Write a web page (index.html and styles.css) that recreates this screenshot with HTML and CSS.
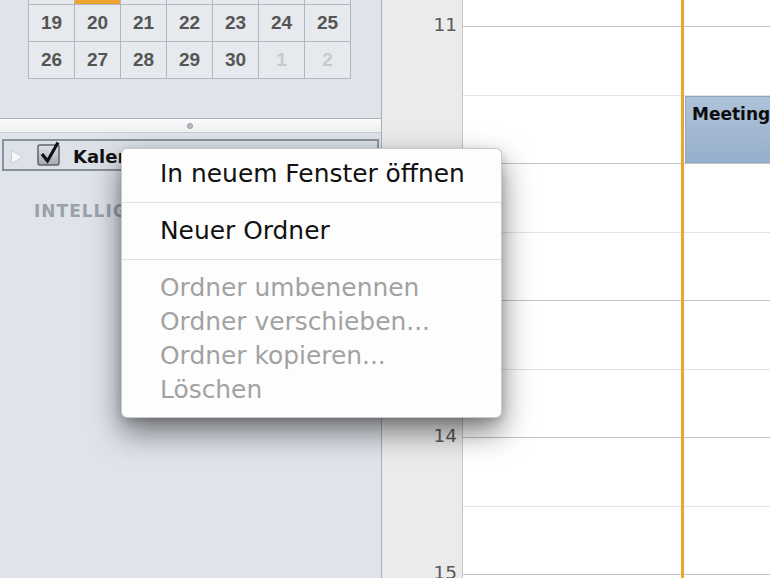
FILE: index.html
```html
<!DOCTYPE html>
<html lang="de">
<head>
<meta charset="utf-8">
<title>Kalender</title>
<link rel="stylesheet" href="styles.css">
</head>
<body>
<div class="app">
  <aside class="sidebar">
    <div class="minical">
      <div class="cell">12</div><div class="cell today">13</div><div class="cell">14</div><div class="cell">15</div><div class="cell">16</div><div class="cell">17</div><div class="cell">18</div>
      <div class="cell">19</div><div class="cell">20</div><div class="cell">21</div><div class="cell">22</div><div class="cell">23</div><div class="cell">24</div><div class="cell">25</div>
      <div class="cell">26</div><div class="cell">27</div><div class="cell">28</div><div class="cell">29</div><div class="cell">30</div><div class="cell muted">1</div><div class="cell muted">2</div>
    </div>
    <div class="splitter"><span class="dimple"></span></div>
    <div class="folder-row">
      <svg class="disclosure" width="12" height="14" viewBox="0 0 12 14"><path d="M0.5 0.5 L11.5 7 L0.5 13.5 Z" fill="#f7f8fa" stroke="#c9ced6" stroke-width="1"/></svg>
      <svg class="checkbox" width="24" height="24" viewBox="0 0 24 24">
        <defs><linearGradient id="cb" x1="0" y1="0" x2="0" y2="1"><stop offset="0" stop-color="#e2e5ea"/><stop offset="1" stop-color="#a3a9b2"/></linearGradient></defs>
        <rect x="1" y="3" width="21" height="20" rx="2" fill="url(#cb)" stroke="#5d636c" stroke-width="1.5"/>
        <path d="M5 12 L10.5 19 L21 0.5" fill="none" stroke="#111" stroke-width="3.2" stroke-linejoin="miter"/>
      </svg>
      <span class="folder-name">Kalender</span>
    </div>
    <div class="section-title">INTELLIGENTE ORDNER</div>
  </aside>

  <div class="timecol">
    <div class="hour">11</div>
    <div class="hour">12</div>
    <div class="hour">13</div>
    <div class="hour">14</div>
    <div class="hour">15</div>
  </div>

  <div class="days">
    <div class="day"></div>
    <div class="day today-col">
      <div class="event" style="top:96px;height:67px">Meeting</div>
    </div>
  </div>
</div>

<div class="context-menu">
  <div class="item">In neuem Fenster öffnen</div>
  <div class="sep"></div>
  <div class="item">Neuer Ordner</div>
  <div class="sep"></div>
  <div class="item disabled">Ordner umbenennen</div>
  <div class="item disabled">Ordner verschieben...</div>
  <div class="item disabled">Ordner kopieren...</div>
  <div class="item disabled">Löschen</div>
</div>
</body>
</html>
```

FILE: styles.css
```css
* { box-sizing: border-box; }
html, body {
  margin: 0;
  padding: 0;
  width: 770px;
  height: 578px;
  overflow: hidden;
  background: #fff;
  font-family: "DejaVu Sans", "Liberation Sans", sans-serif;
}
.app {
  display: flex;
  width: 770px;
  height: 578px;
  overflow: hidden;
  position: relative;
}

/* Sidebar */
.sidebar {
  width: 382px;
  flex: none;
  height: 578px;
  overflow: hidden;
  background: #dfe3ea;
  border-right: 1px solid #a9adb4;
}
.minical {
  display: grid;
  grid-template-columns: repeat(7, 46px);
  width: max-content;
  margin: -32px 0 0 28px;
  border-left: 1px solid #b3b7be;
}
.cell {
  height: 37px;
  border-right: 1px solid #b3b7be;
  border-bottom: 1px solid #b3b7be;
  background: #e6e9ed;
  display: flex;
  align-items: center;
  justify-content: center;
  font-family: "Liberation Sans", Arial, sans-serif;
  font-weight: bold;
  font-size: 19px;
  color: #555;
}
.cell.today { background: #eea530; }
.cell.muted { color: #c6c9ce; }

.splitter {
  margin-top: 39px;
  height: 15px;
  border-top: 1px solid #adb1b7;
  border-bottom: 1px solid #c9cdd3;
  background: linear-gradient(#fbfbfc, #eef0f2);
  display: flex;
  align-items: center;
  justify-content: center;
  padding-right: 2px;
}
.dimple {
  width: 6px;
  height: 6px;
  border-radius: 50%;
  background: #b9bcc0;
  border: 1px solid #9a9ea4;
}

.folder-row {
  margin: 6px 2px 0 2px;
  height: 32px;
  border: 2px solid #8a929e;
  background: #dde2e9;
  display: flex;
  align-items: center;
  padding-top: 3px;
}
.disclosure { margin-left: 7px; flex: none; }
.checkbox { margin-left: 14px; margin-top: -6px; flex: none; overflow: visible; }
.folder-name {
  margin-left: 12px;
  font-weight: bold;
  font-size: 18px;
  color: #111;
}
.section-title {
  margin-top: 30px;
  padding-left: 34px;
  font-weight: bold;
  font-size: 17px;
  letter-spacing: 1px;
  line-height: 20px;
  color: #9aa1ab;
}

/* Time column */
.timecol {
  width: 81px;
  flex: none;
  background: #ebebeb;
  border-right: 1px solid #c6c6c6;
  padding: 15px 5px 0 0;
}
.hour {
  height: 137px;
  text-align: right;
  font-size: 18.5px;
  line-height: 20px;
  color: #5a5a5a;
}

/* Days */
.days {
  flex: 1;
  display: flex;
  overflow: hidden;
  background: repeating-linear-gradient(to bottom,
    transparent 0 26px,
    #c2c2c2 26px 27px,
    transparent 27px 95px,
    #e3e3e3 95px 96px,
    transparent 96px 137px);
}
.day { width: 218px; flex: none; position: relative; }
.day.today-col {
  flex: 1;
  overflow: hidden;
  border-left: 3px solid #e9a62a;
}
.event {
  position: absolute;
  left: 1px;
  right: -4px;
  border: 1px solid #8fa8c8;
  background: linear-gradient(#afc2da, #97afcc);
  padding: 7px 6px;
  font-weight: bold;
  font-size: 17px;
  line-height: 20px;
  color: #0d0d0d;
  white-space: nowrap;
  overflow: hidden;
}

/* Context menu */
.context-menu {
  position: absolute;
  left: 121px;
  top: 148px;
  width: 381px;
  background: #fdfdfd;
  border: 1px solid rgba(0, 0, 0, 0.2);
  border-radius: 6px;
  box-shadow: 0 14px 30px rgba(0, 0, 0, 0.5), 0 3px 8px rgba(0, 0, 0, 0.15);
  padding: 8px 0 10px 0;
}
.item {
  height: 34px;
  line-height: 34px;
  padding-left: 38px;
  font-size: 24.9px;
  color: #111;
  white-space: nowrap;
}
.item.disabled { color: #a2a2a2; }
.sep {
  height: 1px;
  margin: 11px 0;
  background: #e1e1e1;
}
```
